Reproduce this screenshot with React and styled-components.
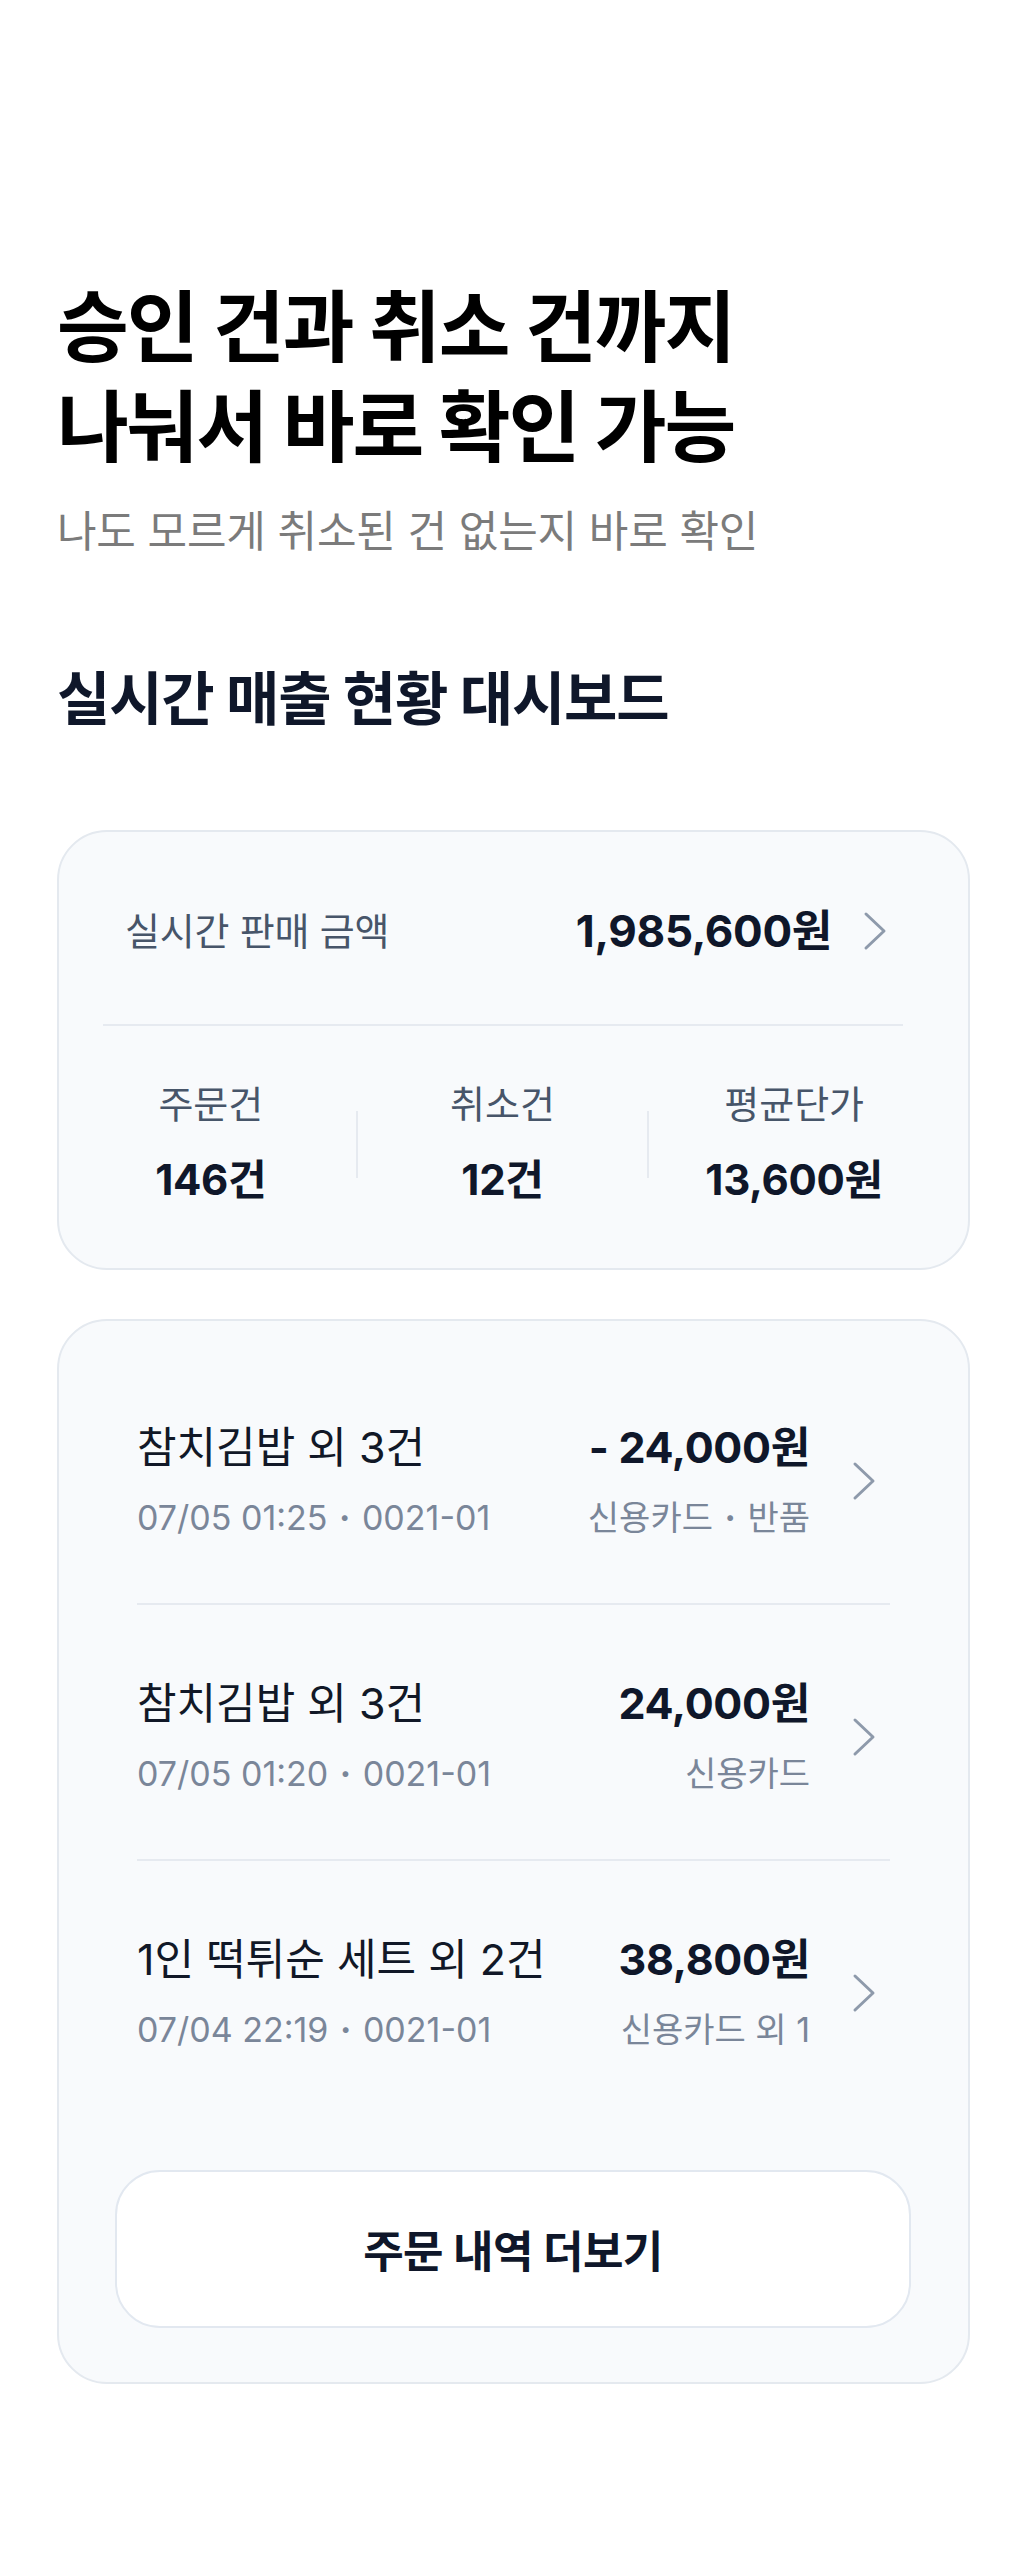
import styled, { createGlobalStyle } from "styled-components";

const GlobalStyle = createGlobalStyle`
  html, body {
    margin: 0;
    padding: 0;
    background: #ffffff;
  }
  body {
    font-family: Inter, "Noto Sans CJK KR", sans-serif;
    -webkit-font-smoothing: antialiased;
  }
  * {
    box-sizing: border-box;
  }
`;

const Page = styled.main`
  width: 1029px;
  padding: 278px 59px 176px 57px;
  background: #ffffff;
`;

const Headline = styled.h1`
  margin: 0;
  font-size: 78px;
  line-height: 100px;
  font-weight: 700;
  letter-spacing: -2px;
  color: #000000;
`;

const Subtitle = styled.p`
  margin: 25px 0 0;
  font-size: 43px;
  line-height: 56px;
  font-weight: 400;
  letter-spacing: -0.2px;
  color: #7b7b7b;
`;

const SectionTitle = styled.h2`
  margin: 102px 0 0;
  font-size: 58px;
  line-height: 76px;
  font-weight: 700;
  letter-spacing: -1.2px;
  color: #0f172a;
`;

const Card = styled.section`
  margin-top: ${({ gap }) => gap}px;
  background: #f8fafc;
  border: 2px solid #e4e9ef;
  border-radius: 50px;
  padding: ${({ pad }) => pad || "0"};
`;

const SalesRow = styled.div`
  display: flex;
  align-items: center;
  padding: 71px 81px 65px 66px;
`;

const SalesLabel = styled.span`
  flex: 1;
  font-size: 38px;
  line-height: 56px;
  letter-spacing: -0.2px;
  color: #475569;
`;

const Amount = styled.span`
  font-size: ${({ size }) => size || 43}px;
  line-height: 56px;
  font-weight: 700;
  letter-spacing: -0.3px;
  color: #0f172a;
  white-space: nowrap;
`;

const Divider = styled.hr`
  margin: 0 65px 0 44px;
  height: 2px;
  border: none;
  background: #e6eaf0;
`;

const Stats = styled.div`
  display: grid;
  grid-template-columns: 1fr 2px 1fr 2px 1fr;
  align-items: center;
  padding: 56px 29px 62px 7px;
`;

const Stat = styled.div`
  display: flex;
  flex-direction: column;
  align-items: center;
`;

const StatLabel = styled.span`
  font-size: 38px;
  line-height: 44px;
  color: #475569;
`;

const StatValue = styled.span`
  margin-top: 28px;
  font-size: 42px;
  line-height: 52px;
  font-weight: 700;
  letter-spacing: -0.3px;
  color: #0f172a;
`;

const StatSeparator = styled.span`
  width: 2px;
  height: 67px;
  background: #e6eaf0;
`;

const OrderList = styled.ul`
  list-style: none;
  margin: 0 78px;
  padding: 0;
`;

const OrderRow = styled.li`
  display: flex;
  align-items: center;
  padding: 70px 0 61px;
  border-bottom: 2px solid #e6eaf0;

  &:last-child {
    border-bottom: none;
  }
`;

const OrderInfo = styled.div`
  flex: 1;
  min-width: 0;
`;

const OrderTitle = styled.div`
  font-size: 43px;
  line-height: 56px;
  color: #111827;
  white-space: nowrap;
`;

const OrderMeta = styled.div`
  margin-top: 19px;
  font-size: 34px;
  line-height: 48px;
  color: #7a8699;
  white-space: nowrap;
  text-align: ${({ align }) => align || "left"};
`;

const Dot = styled.span`
  margin: 0 2px;
  font-weight: 700;
`;

const OrderPrice = styled.div`
  text-align: right;
`;

const Chevron = styled.svg`
  flex: none;
  width: 24px;
  height: 40px;
  margin-left: ${({ gap }) => gap}px;
  margin-right: ${({ end }) => end || 0}px;
`;

const MoreButton = styled.button`
  display: block;
  width: calc(100% - 113px);
  height: 158px;
  margin: 55px 57px 0 56px;
  background: #ffffff;
  border: 2px solid #e2e8f0;
  border-radius: 45px;
  font-family: inherit;
  font-size: 44px;
  font-weight: 700;
  letter-spacing: -0.5px;
  color: #0f172a;
  cursor: pointer;
`;

const ChevronIcon = ({ gap, end }) => (
  <Chevron gap={gap} end={end} viewBox="0 0 24 40" fill="none">
    <path
      d="M3 3 L21 20 L3 37"
      stroke="#8e9aab"
      strokeWidth="3"
      strokeLinecap="round"
      strokeLinejoin="round"
    />
  </Chevron>
);

// "a · b" -> a <Dot>·</Dot> b
const withDots = (text) =>
  text.split(" · ").map((part, i) => (
    <span key={part}>
      {i > 0 && (
        <>
          {" "}
          <Dot>·</Dot>{" "}
        </>
      )}
      {part}
    </span>
  ));

const stats = [
  { label: "주문건", value: "146건" },
  { label: "취소건", value: "12건" },
  { label: "평균단가", value: "13,600원" },
];

const orders = [
  {
    title: "참치김밥 외 3건",
    meta: "07/05 01:25 · 0021-01",
    price: "- 24,000원",
    payment: "신용카드 · 반품",
  },
  {
    title: "참치김밥 외 3건",
    meta: "07/05 01:20 · 0021-01",
    price: "24,000원",
    payment: "신용카드",
  },
  {
    title: "1인 떡튀순 세트 외 2건",
    meta: "07/04 22:19 · 0021-01",
    price: "38,800원",
    payment: "신용카드 외 1",
  },
];

export default function App() {
  return (
    <>
      <GlobalStyle />
      <Page>
        <Headline>
          승인 건과 취소 건까지
          <br />
          나눠서 바로 확인 가능
        </Headline>
        <Subtitle>나도 모르게 취소된 건 없는지 바로 확인</Subtitle>

        <SectionTitle>실시간 매출 현황 대시보드</SectionTitle>

        <Card gap={93}>
          <SalesRow>
            <SalesLabel>실시간 판매 금액</SalesLabel>
            <Amount size={44}>1,985,600원</Amount>
            <ChevronIcon gap={31} />
          </SalesRow>
          <Divider />
          <Stats>
            {stats.map((stat, i) => [
              i > 0 && <StatSeparator key={`sep-${stat.label}`} />,
              <Stat key={stat.label}>
                <StatLabel>{stat.label}</StatLabel>
                <StatValue>{stat.value}</StatValue>
              </Stat>,
            ])}
          </Stats>
        </Card>

        <Card gap={49} pad="28px 0 54px">
          <OrderList>
            {orders.map((order) => (
              <OrderRow key={order.meta}>
                <OrderInfo>
                  <OrderTitle>{order.title}</OrderTitle>
                  <OrderMeta>{withDots(order.meta)}</OrderMeta>
                </OrderInfo>
                <OrderPrice>
                  <Amount>{order.price}</Amount>
                  <OrderMeta align="right">{withDots(order.payment)}</OrderMeta>
                </OrderPrice>
                <ChevronIcon gap={42} end={14} />
              </OrderRow>
            ))}
          </OrderList>
          <MoreButton type="button">주문 내역 더보기</MoreButton>
        </Card>
      </Page>
    </>
  );
}
